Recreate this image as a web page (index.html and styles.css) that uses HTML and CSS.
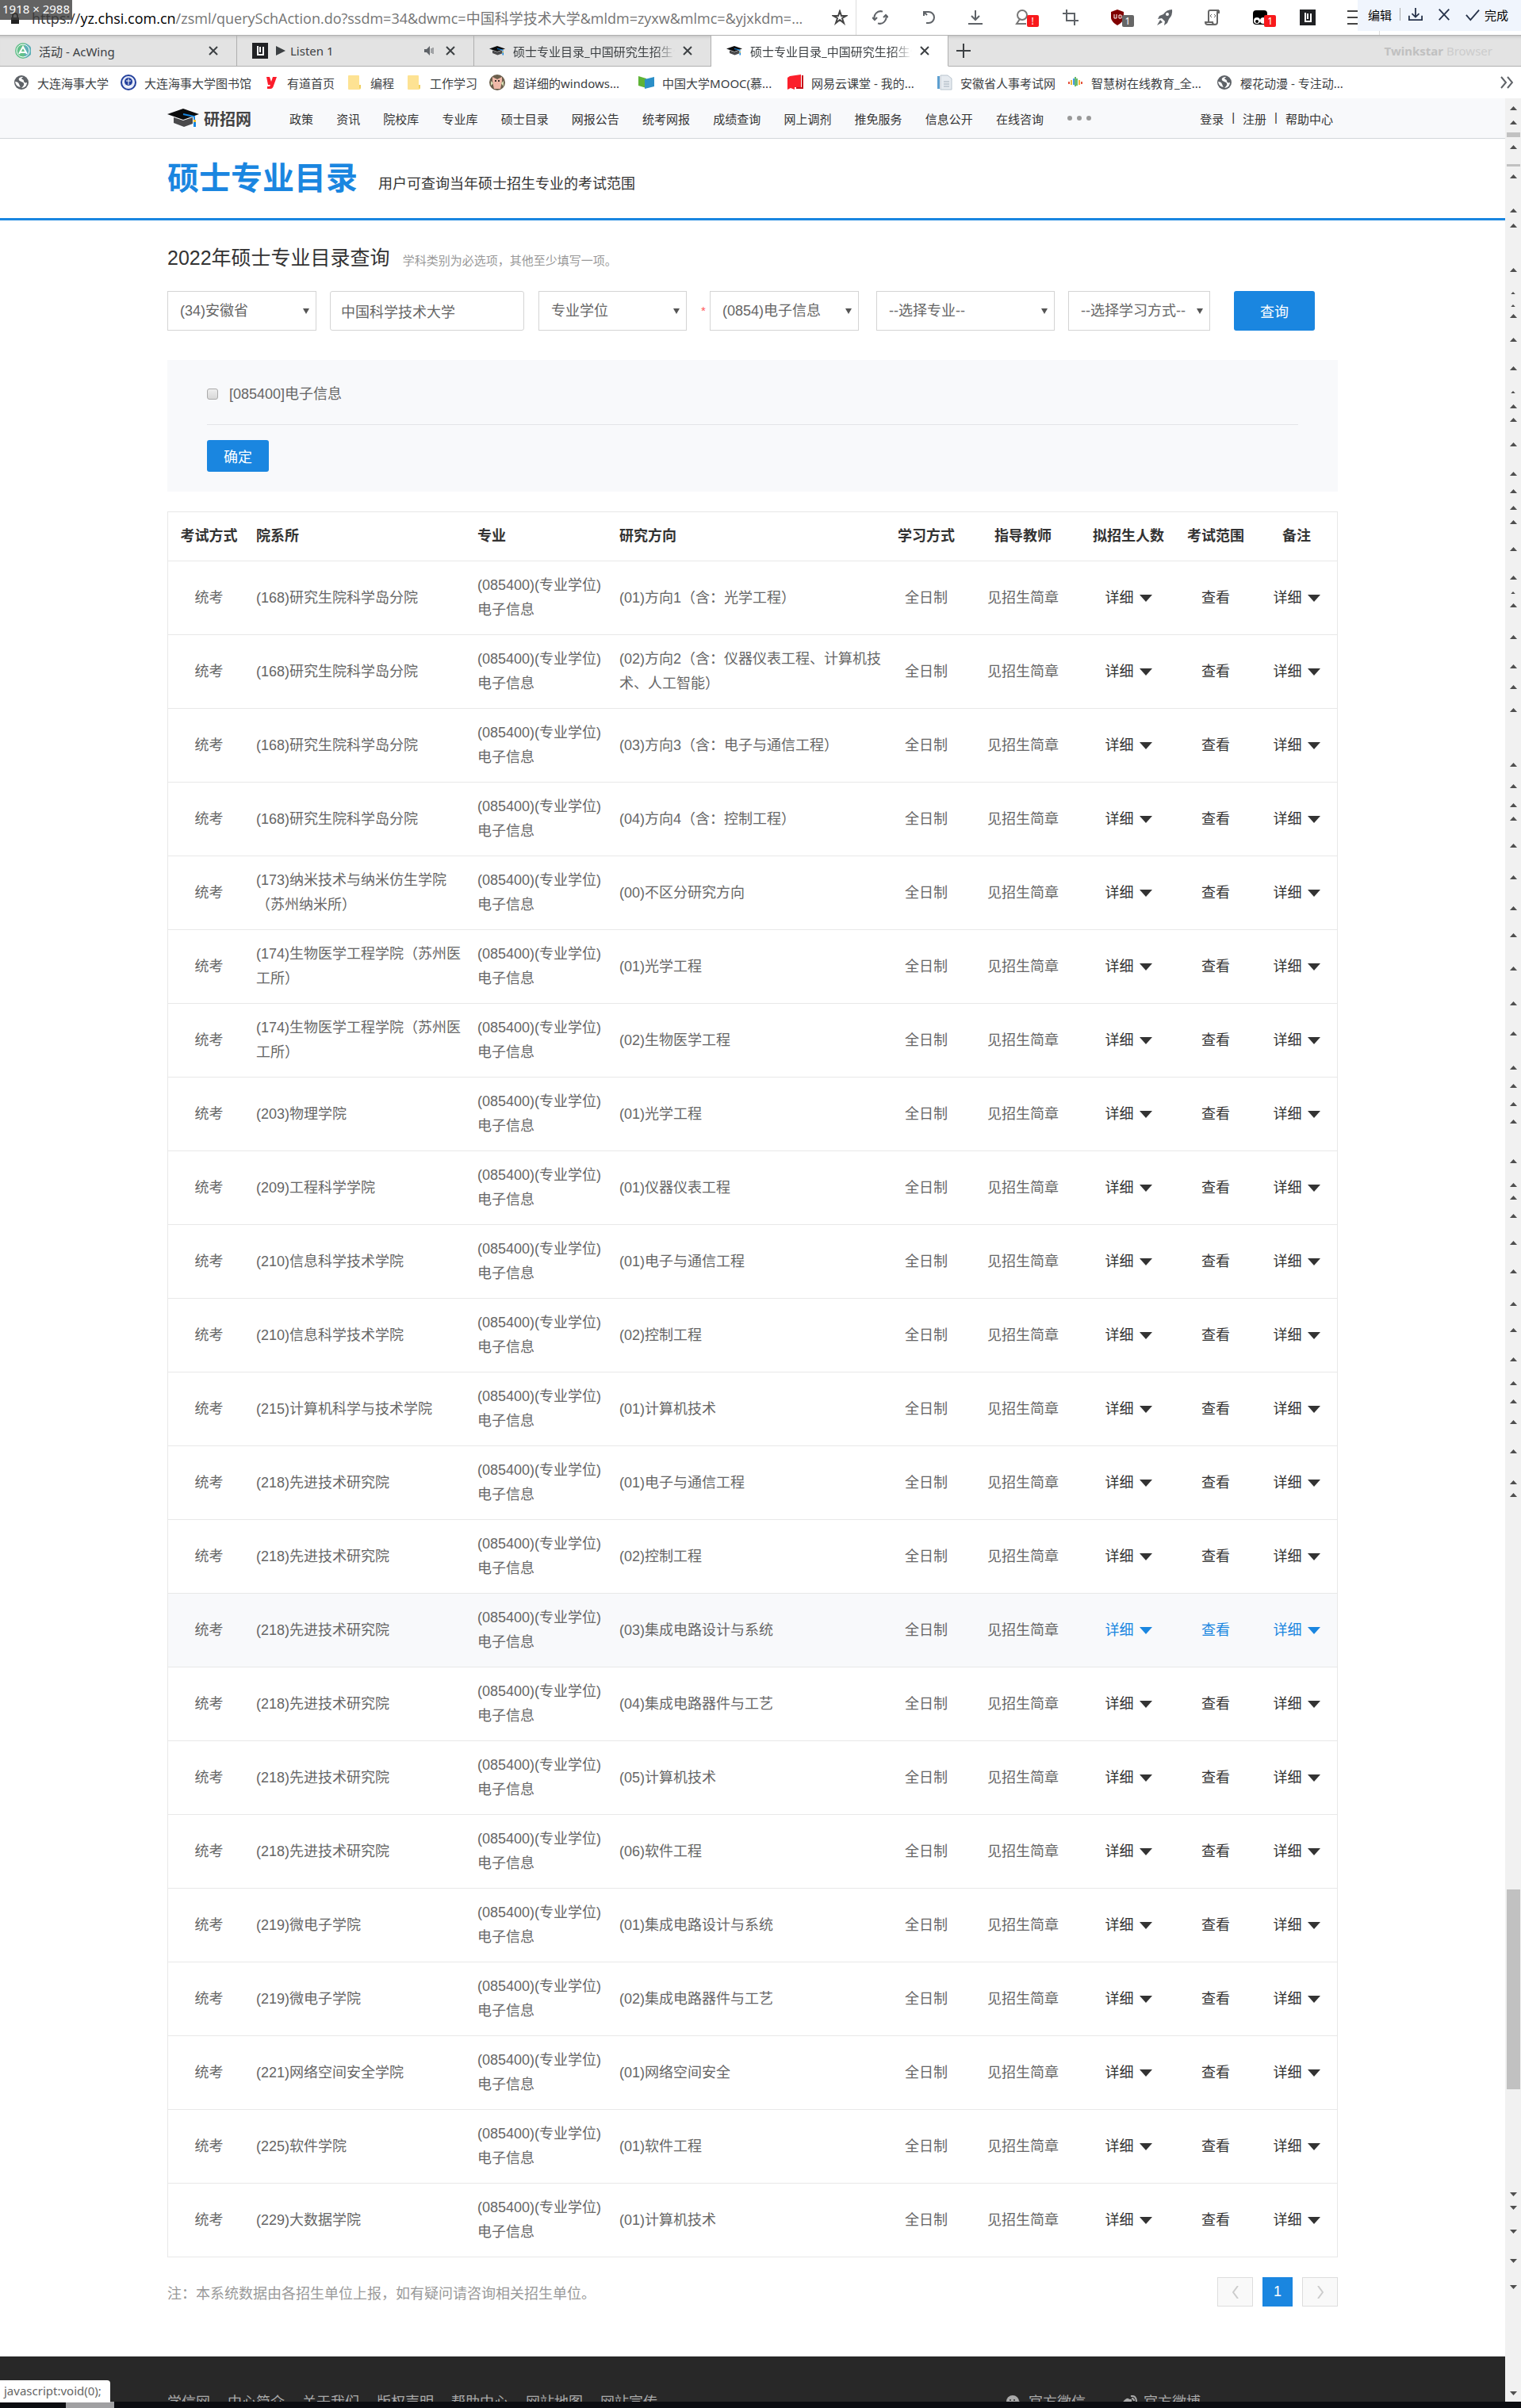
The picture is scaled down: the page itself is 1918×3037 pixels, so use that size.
FILE: index.html
```html
<!DOCTYPE html>
<html lang="zh-CN">
<head>
<meta charset="utf-8">
<title>硕士专业目录_中国研究生招生信息网</title>
<link rel="stylesheet" href="styles.css">
</head>
<body>
<svg class="defs" aria-hidden="true">
  <symbol id="cap" viewBox="0 0 40 24"><path d="M0 7 20 0l20 7-20 7z" fill="#0b0b0c"/><path d="M8 11l12 4 12-4v8l-11 4-13-5z" fill="#4a4a4c"/><path d="M20 7l14 3v8" fill="none" stroke="#1786e0" stroke-width="2"/><path d="M33 14h3v3h-3z" fill="#f2c230"/><path d="M33 17h3v6h-3z" fill="#1786e0"/></symbol>
  <symbol id="globe" viewBox="0 0 20 20"><circle cx="10" cy="10" r="9" fill="#5f6368"/><path d="M12 3c-4 0-6 2-5 4s5 2 6 4-1 4-3 6c5 0 7-4 7-7-2 1-4 0-4-2s-3-2-3-3 2-1 2-2z" fill="#fff"/><path d="M2 9q4 0 5 3t2 4q-6-1-7-7z" fill="#fff"/></symbol>
  <symbol id="folder" viewBox="0 0 20 20"><path d="M2 2q0-1 1-1h12q1 0 1 1v11h2v4q0 2-2 2H3q-1 0-1-1z" fill="#fde293"/><path d="M16 13v3q0 2 1 2t1-2v-3z" fill="#f0cf5e"/></symbol>
  <symbol id="close" viewBox="0 0 12 12"><path d="M1 1l10 10M11 1 1 11" stroke="#3c4043" stroke-width="2"/></symbol>
  <symbol id="listen" viewBox="0 0 20 20"><path d="M0 0h20v20H0z" fill="#202124"/><path d="M7 4v11h7V5M10 5v7" stroke="#fff" stroke-width="2" fill="none"/></symbol>
  <symbol id="up" viewBox="0 0 9 5"><path d="M0 5 4.500 0 9 5z" fill="#4f4f4f"/></symbol>
  <symbol id="down" viewBox="0 0 9 5"><path d="M0 0h9L4.500 5z" fill="#4f4f4f"/></symbol>
</svg>

<div class="toolbar">
  <div class="address">
    <svg class="lock" viewBox="0 0 12 14"><path d="M1 6h10v8H1z" fill="#222"/><path d="M3 6V4a3 3 0 0 1 6 0v2" fill="none" stroke="#222" stroke-width="2"/></svg>
    <span class="url"><span>https://</span><b>yz.chsi.com.cn</b>/zsml/querySchAction.do?ssdm=34&amp;dwmc=中国科学技术大学&amp;mldm=zyxw&amp;mlmc=&amp;yjxkdm=...</span>
    <button class="star" aria-label="收藏"><svg viewBox="0 0 20 20"><path d="M10 2l2 6h6l-5 3 2 6-5-4-5 4 2-6-5-3h6z" fill="none" stroke="#444" stroke-width="2"/></svg></button>
  </div>
  <div class="tools">
    <button aria-label="刷新"><svg viewBox="0 0 20 20" fill="none" stroke="#5f6368" stroke-width="2"><path d="M3 13A8 8 0 0 1 13 2.600M17 7A8 8 0 0 1 7 17.400"/><path d="M0 10l3 3 3-3M14 10l3-3 3 3"/></svg></button>
    <button aria-label="恢复"><svg viewBox="0 0 20 20" fill="none" stroke="#5f6368" stroke-width="2"><path d="M5 3h6a7 7 0 0 1 0 14H8M5 3l4 4M5 2v6"/></svg></button>
    <button aria-label="下载"><svg viewBox="0 0 20 20" fill="none" stroke="#5f6368" stroke-width="2"><path d="M10 1v12M5 8l5 5 5-5M1 18h18"/></svg></button>
    <button aria-label="用户"><svg viewBox="0 0 20 20" fill="none" stroke="#777" stroke-width="2"><circle cx="9" cy="7" r="6"/><path d="M6 12l-4 6h12"/></svg><i class="badge red">!</i></button>
    <button aria-label="截图"><svg viewBox="0 0 20 20" fill="none" stroke="#5f6368" stroke-width="2"><path d="M5 0v14h15M0 5h15v15"/></svg></button>
    <button aria-label="拦截"><svg viewBox="0 0 20 20"><path d="M10 0l8 3v8q-1 5-8 9-7-4-8-9V3z" fill="#800000"/><path d="M6 6v5h3V6M12 7h3v4h-3z" fill="none" stroke="#fff"/></svg><i class="badge gray">1</i></button>
    <button aria-label="加速"><svg viewBox="0 0 20 20" fill="#5f6368"><path d="M19 0q-7 0-11 6L3 8l-2 4 5-1 4 4-1 5 4-3 2-5q5-5 4-12z"/><path d="M4 13l-4 7 7-4z"/><circle cx="13" cy="6" r="2" fill="#fff"/></svg></button>
    <button aria-label="脚本"><svg viewBox="0 0 20 20" fill="none" stroke="#666" stroke-width="2"><path d="M5 15V3q0-2 2-2h11q-2 0-2 3v12q0 3-3 3H4q-3 0-3-3h9q0 3 3 3M18 1v3h-2"/><path d="M9 6L7 8l2 2M12 6l2 2-2 2" stroke-width="1"/></svg></button>
    <button aria-label="油猴"><svg viewBox="0 0 20 20"><rect x="1" y="1" width="18" height="18" rx="4"/><circle cx="6" cy="14" r="4" fill="#fff"/><circle cx="14" cy="14" r="4" fill="#fff"/><circle cx="6" cy="15" r="2"/></svg><i class="badge red">1</i></button>
    <button aria-label="Listen 1"><svg><use href="#listen"/></svg></button>
    <button aria-label="菜单"><svg viewBox="0 0 20 20" stroke="#444" stroke-width="2"><path d="M0 2h20M0 10h20M0 18h20"/></svg></button>
  </div>
</div>

<div class="tabs">
  <div class="tab"><svg class="ico" viewBox="0 0 20 20"><circle cx="10" cy="10" r="10" fill="#63c08a"/><path d="M12 1a9 9 0 0 1 0 18z" fill="#5fb0b8"/><circle cx="10" cy="10" r="8" fill="none" stroke="#fff"/><path d="M5 14l5-9 5 9M7 12h6" fill="none" stroke="#fff" stroke-width="2"/></svg><span>活动 - AcWing</span><button aria-label="关闭"><svg><use href="#close"/></svg></button></div>
  <div class="tab"><svg class="ico"><use href="#listen"/></svg><span><svg class="play" viewBox="0 0 12 12"><path d="M0 0l12 6-12 6z" fill="#3c4043"/></svg>Listen 1</span><svg class="sound" viewBox="0 0 12 12"><path d="M0 4h3l4-4v12L3 8H0z" fill="#5f6368"/><path d="M9 3v6M11 2v8" stroke="#5f6368"/></svg><button aria-label="关闭"><svg><use href="#close"/></svg></button></div>
  <div class="tab"><svg class="ico"><use href="#cap"/></svg><span class="fade">硕士专业目录_中国研究生招生信息网</span><button aria-label="关闭"><svg><use href="#close"/></svg></button></div>
  <div class="tab active"><svg class="ico"><use href="#cap"/></svg><span class="fade">硕士专业目录_中国研究生招生信息网</span><button aria-label="关闭"><svg><use href="#close"/></svg></button></div>
  <div class="tabs-rest"><button aria-label="新标签页"><svg viewBox="0 0 18 18" stroke="#3c4043" stroke-width="2"><path d="M9 0v18M0 9h18"/></svg></button><span class="brand"><b>Twinkstar</b> Browser</span></div>
</div>

<nav class="bookmarks" aria-label="书签">
  <a href="#"><svg><use href="#globe"/></svg>大连海事大学</a>
  <a href="#"><svg viewBox="0 0 20 20"><circle cx="10" cy="10" r="9" fill="#e6eaf8" stroke="#23409c" stroke-width="2"/><circle cx="10" cy="9" r="5" fill="#23409c"/><path d="M6 15h8M10 5v8M7 8h6" stroke="#fff"/></svg>大连海事大学图书馆</a>
  <a href="#"><svg viewBox="0 0 20 20"><path d="M4 3h4l2 6 2-6h5l-4 11q-1 4-4 4H5v-3h3l1-2H6z" fill="#fb1c2b"/></svg>有道首页</a>
  <a href="#"><svg><use href="#folder"/></svg>编程</a>
  <a href="#"><svg><use href="#folder"/></svg>工作学习</a>
  <a href="#" class="long"><svg viewBox="0 0 20 20"><circle cx="10" cy="10" r="10" fill="#6b5f4c"/><path d="M4 3l6 3 6-3v6l-2 9H6L4 9z" fill="#f0b9a8"/><path d="M2 8l3 3-3 3zM18 8l-3 3 3 4z" fill="#d8e0b4"/><circle cx="8" cy="8" r="1"/><circle cx="12" cy="8" r="1"/></svg>超详细的windows...</a>
  <a href="#" class="long"><svg viewBox="0 0 20 20"><path d="M0 2l10 3v12L0 14z" fill="#5fb336"/><path d="M20 3L8 6v12l12-3z" fill="#2b8fc7"/></svg>中国大学MOOC(慕...</a>
  <a href="#" class="long"><svg viewBox="0 0 20 20"><path d="M3 2l14-2v16H9v3l-5-2-4 2V4z" fill="#fb1f2b"/><path d="M18 1h2v17h-9v-2h7z" fill="#c6101b"/></svg>网易云课堂 - 我的...</a>
  <a href="#"><svg viewBox="0 0 20 20"><path d="M1 2h3v16H1z" fill="#5d9fd0"/><path d="M5 1h9l5 4v14H5z" fill="#e6ebf0" stroke="#b8c3cd"/><path d="M9 9h7M9 12h7M9 15h7" stroke="#a3afbb"/></svg>安徽省人事考试网</a>
  <a href="#" class="long"><svg viewBox="0 0 20 20" stroke-width="2"><path d="M2 9v3M18 9v3" stroke="#e5533c"/><path d="M5 7v6M15 7v6" stroke="#f0b73a"/><path d="M8 5v8" stroke="#4a9be8"/><path d="M12 5v9M10 3v12" stroke="#69ba6d"/></svg>智慧树在线教育_全...</a>
  <a href="#" class="long"><svg><use href="#globe"/></svg>樱花动漫 - 专注动...</a>
  <button class="overflow" aria-label="更多书签"><svg viewBox="0 0 16 16" fill="none" stroke="#5f6368" stroke-width="2"><path d="M1 1l6 7-6 7M9 1l6 7-6 7"/></svg></button>
</nav>

<div class="viewport">
  <div class="site">
    <header class="site-head">
      <div class="wrap head-row">
        <a href="#" class="logo"><svg><use href="#cap"/></svg>研招网</a>
        <nav class="menu" aria-label="主导航">
          <a href="#">政策</a><a href="#">资讯</a><a href="#">院校库</a><a href="#">专业库</a><a href="#">硕士目录</a><a href="#">网报公告</a><a href="#">统考网报</a><a href="#">成绩查询</a><a href="#">网上调剂</a><a href="#">推免服务</a><a href="#">信息公开</a><a href="#">在线咨询</a>
        </nav>
        <button class="dots" aria-label="更多"><i></i><i></i><i></i></button>
        <div class="account"><a href="#">登录</a><span>|</span><a href="#">注册</a><span>|</span><a href="#">帮助中心</a></div>
      </div>
    </header>
    <div class="title-bar"><div class="wrap title-row"><h1>硕士专业目录</h1><p>用户可查询当年硕士招生专业的考试范围</p></div></div>

    <main class="wrap">
      <div class="query-head"><h2>2022年硕士专业目录查询</h2><p>学科类别为必选项，其他至少填写一项。</p></div>
      <form class="query" onsubmit="return false">
        <label class="pick province"><select aria-label="省市"><option>(34)安徽省</option></select></label>
        <input class="school" type="text" aria-label="招生单位" value="中国科学技术大学">
        <label class="pick degree"><select aria-label="门类"><option>专业学位</option></select></label>
        <label class="pick subject"><select aria-label="学科类别"><option>(0854)电子信息</option></select></label>
        <label class="pick major"><select aria-label="专业"><option>--选择专业--</option></select></label>
        <label class="pick mode"><select aria-label="学习方式"><option>--选择学习方式--</option></select></label>
        <button class="primary search">查询</button>
      </form>
      <section class="filter">
        <div class="filter-opts"><input type="checkbox" id="m085400"><label for="m085400">[085400]电子信息</label></div>
        <button class="primary confirm">确定</button>
      </section>

      <table class="results">
        <colgroup><col class="c-exam"><col class="c-dept"><col class="c-major"><col class="c-dir"><col class="c-mode"><col class="c-tutor"><col class="c-num"><col class="c-side"><col class="c-side"></colgroup>
        <thead><tr><th>考试方式</th><th>院系所</th><th>专业</th><th>研究方向</th><th>学习方式</th><th>指导教师</th><th>拟招生人数</th><th>考试范围</th><th>备注</th></tr></thead>
        <tbody>
<tr><td>统考</td><td>(168)研究生院科学岛分院</td><td>(085400)(专业学位)电子信息</td><td>(01)方向1（含：光学工程）</td><td>全日制</td><td>见招生简章</td><td><a href="#" class="more">详细</a></td><td><a href="#">查看</a></td><td><a href="#" class="more">详细</a></td></tr>
<tr><td>统考</td><td>(168)研究生院科学岛分院</td><td>(085400)(专业学位)电子信息</td><td>(02)方向2（含：仪器仪表工程、计算机技术、人工智能）</td><td>全日制</td><td>见招生简章</td><td><a href="#" class="more">详细</a></td><td><a href="#">查看</a></td><td><a href="#" class="more">详细</a></td></tr>
<tr><td>统考</td><td>(168)研究生院科学岛分院</td><td>(085400)(专业学位)电子信息</td><td>(03)方向3（含：电子与通信工程）</td><td>全日制</td><td>见招生简章</td><td><a href="#" class="more">详细</a></td><td><a href="#">查看</a></td><td><a href="#" class="more">详细</a></td></tr>
<tr><td>统考</td><td>(168)研究生院科学岛分院</td><td>(085400)(专业学位)电子信息</td><td>(04)方向4（含：控制工程）</td><td>全日制</td><td>见招生简章</td><td><a href="#" class="more">详细</a></td><td><a href="#">查看</a></td><td><a href="#" class="more">详细</a></td></tr>
<tr><td>统考</td><td>(173)纳米技术与纳米仿生学院（苏州纳米所）</td><td>(085400)(专业学位)电子信息</td><td>(00)不区分研究方向</td><td>全日制</td><td>见招生简章</td><td><a href="#" class="more">详细</a></td><td><a href="#">查看</a></td><td><a href="#" class="more">详细</a></td></tr>
<tr><td>统考</td><td>(174)生物医学工程学院（苏州医工所）</td><td>(085400)(专业学位)电子信息</td><td>(01)光学工程</td><td>全日制</td><td>见招生简章</td><td><a href="#" class="more">详细</a></td><td><a href="#">查看</a></td><td><a href="#" class="more">详细</a></td></tr>
<tr><td>统考</td><td>(174)生物医学工程学院（苏州医工所）</td><td>(085400)(专业学位)电子信息</td><td>(02)生物医学工程</td><td>全日制</td><td>见招生简章</td><td><a href="#" class="more">详细</a></td><td><a href="#">查看</a></td><td><a href="#" class="more">详细</a></td></tr>
<tr><td>统考</td><td>(203)物理学院</td><td>(085400)(专业学位)电子信息</td><td>(01)光学工程</td><td>全日制</td><td>见招生简章</td><td><a href="#" class="more">详细</a></td><td><a href="#">查看</a></td><td><a href="#" class="more">详细</a></td></tr>
<tr><td>统考</td><td>(209)工程科学学院</td><td>(085400)(专业学位)电子信息</td><td>(01)仪器仪表工程</td><td>全日制</td><td>见招生简章</td><td><a href="#" class="more">详细</a></td><td><a href="#">查看</a></td><td><a href="#" class="more">详细</a></td></tr>
<tr><td>统考</td><td>(210)信息科学技术学院</td><td>(085400)(专业学位)电子信息</td><td>(01)电子与通信工程</td><td>全日制</td><td>见招生简章</td><td><a href="#" class="more">详细</a></td><td><a href="#">查看</a></td><td><a href="#" class="more">详细</a></td></tr>
<tr><td>统考</td><td>(210)信息科学技术学院</td><td>(085400)(专业学位)电子信息</td><td>(02)控制工程</td><td>全日制</td><td>见招生简章</td><td><a href="#" class="more">详细</a></td><td><a href="#">查看</a></td><td><a href="#" class="more">详细</a></td></tr>
<tr><td>统考</td><td>(215)计算机科学与技术学院</td><td>(085400)(专业学位)电子信息</td><td>(01)计算机技术</td><td>全日制</td><td>见招生简章</td><td><a href="#" class="more">详细</a></td><td><a href="#">查看</a></td><td><a href="#" class="more">详细</a></td></tr>
<tr><td>统考</td><td>(218)先进技术研究院</td><td>(085400)(专业学位)电子信息</td><td>(01)电子与通信工程</td><td>全日制</td><td>见招生简章</td><td><a href="#" class="more">详细</a></td><td><a href="#">查看</a></td><td><a href="#" class="more">详细</a></td></tr>
<tr><td>统考</td><td>(218)先进技术研究院</td><td>(085400)(专业学位)电子信息</td><td>(02)控制工程</td><td>全日制</td><td>见招生简章</td><td><a href="#" class="more">详细</a></td><td><a href="#">查看</a></td><td><a href="#" class="more">详细</a></td></tr>
<tr class="current"><td>统考</td><td>(218)先进技术研究院</td><td>(085400)(专业学位)电子信息</td><td>(03)集成电路设计与系统</td><td>全日制</td><td>见招生简章</td><td><a href="#" class="more">详细</a></td><td><a href="#">查看</a></td><td><a href="#" class="more">详细</a></td></tr>
<tr><td>统考</td><td>(218)先进技术研究院</td><td>(085400)(专业学位)电子信息</td><td>(04)集成电路器件与工艺</td><td>全日制</td><td>见招生简章</td><td><a href="#" class="more">详细</a></td><td><a href="#">查看</a></td><td><a href="#" class="more">详细</a></td></tr>
<tr><td>统考</td><td>(218)先进技术研究院</td><td>(085400)(专业学位)电子信息</td><td>(05)计算机技术</td><td>全日制</td><td>见招生简章</td><td><a href="#" class="more">详细</a></td><td><a href="#">查看</a></td><td><a href="#" class="more">详细</a></td></tr>
<tr><td>统考</td><td>(218)先进技术研究院</td><td>(085400)(专业学位)电子信息</td><td>(06)软件工程</td><td>全日制</td><td>见招生简章</td><td><a href="#" class="more">详细</a></td><td><a href="#">查看</a></td><td><a href="#" class="more">详细</a></td></tr>
<tr><td>统考</td><td>(219)微电子学院</td><td>(085400)(专业学位)电子信息</td><td>(01)集成电路设计与系统</td><td>全日制</td><td>见招生简章</td><td><a href="#" class="more">详细</a></td><td><a href="#">查看</a></td><td><a href="#" class="more">详细</a></td></tr>
<tr><td>统考</td><td>(219)微电子学院</td><td>(085400)(专业学位)电子信息</td><td>(02)集成电路器件与工艺</td><td>全日制</td><td>见招生简章</td><td><a href="#" class="more">详细</a></td><td><a href="#">查看</a></td><td><a href="#" class="more">详细</a></td></tr>
<tr><td>统考</td><td>(221)网络空间安全学院</td><td>(085400)(专业学位)电子信息</td><td>(01)网络空间安全</td><td>全日制</td><td>见招生简章</td><td><a href="#" class="more">详细</a></td><td><a href="#">查看</a></td><td><a href="#" class="more">详细</a></td></tr>
<tr><td>统考</td><td>(225)软件学院</td><td>(085400)(专业学位)电子信息</td><td>(01)软件工程</td><td>全日制</td><td>见招生简章</td><td><a href="#" class="more">详细</a></td><td><a href="#">查看</a></td><td><a href="#" class="more">详细</a></td></tr>
<tr><td>统考</td><td>(229)大数据学院</td><td>(085400)(专业学位)电子信息</td><td>(01)计算机技术</td><td>全日制</td><td>见招生简章</td><td><a href="#" class="more">详细</a></td><td><a href="#">查看</a></td><td><a href="#" class="more">详细</a></td></tr>
        </tbody>
      </table>

      <div class="after">
        <p>注：本系统数据由各招生单位上报，如有疑问请咨询相关招生单位。</p>
        <nav class="pager" aria-label="分页">
          <button aria-label="上一页"><svg viewBox="0 0 8 16"><path d="M7 0L1 8l6 8"/></svg></button>
          <a href="#">1</a>
          <button aria-label="下一页"><svg viewBox="0 0 8 16"><path d="M1 0l6 8-6 8"/></svg></button>
        </nav>
      </div>
    </main>

    <footer class="foot">
      <div class="wrap foot-row">
        <nav class="foot-links" aria-label="页脚"><a href="#">学信网</a><a href="#">中心简介</a><a href="#">关于我们</a><a href="#">版权声明</a><a href="#">帮助中心</a><a href="#">网站地图</a><a href="#">网站宣传</a></nav>
        <div class="social">
          <a href="#"><svg viewBox="0 0 20 20" fill="#aaa"><circle cx="8" cy="8" r="8"/><circle cx="14" cy="13" r="6"/><circle cx="5" cy="6" r="1" fill="#282828"/><circle cx="10" cy="6" r="1" fill="#282828"/></svg>官方微信</a>
          <a href="#"><svg viewBox="0 0 20 20" fill="none" stroke="#aaa" stroke-width="2"><path d="M13 8q1-4-3-3-2-3-6 1-4 4-3 8 3 5 9 4 7-2 6-8z" fill="#aaa" stroke="none"/><path d="M12 1q7-1 7 7M13 4q3 0 3 3"/></svg>官方微博</a>
        </div>
      </div>
    </footer>
  </div>

  <div class="rail" aria-hidden="true">
    <svg width="20" height="2905" viewBox="0 124 20 2905">
      <g fill="#c1c1c1"><path d="M2 167h17v6H2zM2 207h17v3H2zM2 2383h17v252H2z"/></g>
      <g class="ups"></g>
    </svg>
  </div>
</div>
<div class="taskbar"><i></i></div>

<div class="size-tip">1918 × 2988</div>
<div class="shot-bar">
  <button>编辑</button><i></i>
  <button class="save" aria-label="保存"><svg viewBox="0 0 20 20"><path d="M10 1v12M5 9l5 5 5-5M1 12v6h18v-6"/></svg></button>
  <button class="cancel" aria-label="取消"><svg viewBox="0 0 20 20"><path d="M3 3l14 15M17 3L3 18"/></svg></button>
  <button><svg viewBox="0 0 20 20"><path d="M1 11l6 7L19 4"/></svg>完成</button>
</div>
<div class="status">javascript:void(0);</div>
<script src="rail.js"></script>
</body>
</html>
```
FILE: rail.js
```js
// Scroll arrows along the rail: page y of each arrow's centre.
const ups = [136,154,185,222,265,284,340,398,428,464,512,529,560,597,619,640,658,692,728,763,803,840,866,895,964,991,1015,1032,1066,1106,1145,1179,1221,1265,1303,1346,1369,1392,1414,1464,1494,1510,1533,1567,1603,1644,1677,1714,1744,1767,1793,1830,1869,1885];
const smallUps = [369,385,494,747];
const downs = [2767,2784,2814,2851,2884,3018];
const group = document.querySelector(".ups");
function arrow(id, y, w, h) {
  const use = document.createElementNS("http://www.w3.org/2000/svg", "use");
  use.setAttribute("href", "#" + id);
  use.setAttribute("x", 10 - (w >> 1));
  use.setAttribute("y", y - (h >> 1));
  use.setAttribute("width", w);
  use.setAttribute("height", h);
  group.append(use);
}
ups.forEach(y => arrow("up", y, 9, 5));
smallUps.forEach(y => arrow("up", y, 6, 3));
downs.forEach(y => arrow("down", y, 9, 5));
```
FILE: styles.css
```css
* { box-sizing: border-box; }
body { margin: 0; position: relative; background: #fff; color: #333; font-family: "Liberation Sans", "Noto Sans CJK SC", sans-serif; font-size: 18px; overflow-x: hidden; }
a { color: inherit; text-decoration: none; }
button, input, select { font: inherit; color: inherit; margin: 0; }
button { background: none; border: 0; padding: 0; }
h1, h2, p { margin: 0; }
svg { flex: none; }
.defs { position: absolute; width: 0; height: 0; }

/* Browser chrome */
.toolbar, .tabs, .bookmarks, .size-tip, .shot-bar, .status { font-family: "Noto Sans", "Noto Sans CJK SC", sans-serif; font-size: 15px; }
.toolbar { display: flex; height: 45px; border-bottom: 1px solid #b0b0b0; }
.address { flex: 1; min-width: 0; display: flex; align-items: center; padding-left: 13px; border-right: 1px solid #ddd; }
.lock { width: 12px; height: 14px; margin: 2px 15px 0 0; }
.url { flex: 1; min-width: 0; overflow: hidden; white-space: nowrap; color: #757575; font-family: "Open Sans", "Noto Sans CJK SC", sans-serif; font-size: 18px; }
.url span { color: #333; }
.url b { font-weight: 400; color: #000; }
.star { width: 40px; height: 20px; }
.star svg, .tools svg { width: 20px; height: 20px; display: block; margin: auto; }
.tools { display: flex; width: 660px; margin-right: 178px; border-right: 1px solid #ddd; }
.tools button { position: relative; width: 60px; }
.badge { position: absolute; left: 35px; top: 19px; width: 15px; height: 15px; border-radius: 2px; color: #fff; font-size: 12px; font-style: normal; line-height: 15px; }
.red { background: #f8191c; }
.gray { background: #666; }

.tabs { display: flex; height: 39px; background: #e3e3e3; color: #3c4043; }
.tab { width: 299px; display: flex; align-items: center; gap: 10px; padding: 0 23px 0 19px; border-right: 1px solid #b0b0b0; border-bottom: 1px solid #b0b0b0; box-shadow: inset 0 5px 5px -5px #aaa; }
.tab span { flex: 1; min-width: 0; overflow: hidden; white-space: nowrap; }
.tab .fade { -webkit-mask: linear-gradient(to right, #000 88%, transparent); }
.tab.active { background: #fff; border-bottom-color: #fff; box-shadow: none; }
.tab .ico { width: 20px; height: 20px; }
.tab .sound { width: 12px; height: 12px; margin-right: 5px; }
.tab .play { width: 12px; height: 12px; margin-right: 6px; }
.tab button, .tab button svg { width: 12px; height: 12px; display: block; }
.tabs-rest { flex: 1; display: flex; justify-content: space-between; align-items: center; padding: 0 36px 0 10px; border-bottom: 1px solid #b0b0b0; box-shadow: inset 0 5px 5px -5px #aaa; }
.tabs-rest svg { width: 18px; height: 18px; display: block; }
.brand { color: #ccc; }
.brand b { color: #c0c0c0; }

.bookmarks { display: flex; align-items: center; gap: 15px; height: 40px; padding: 0 10px 0 17px; color: #3c4043; }
.bookmarks a { display: flex; align-items: center; gap: 10px; white-space: nowrap; }
.bookmarks a svg { width: 20px; height: 20px; }
.bookmarks .long { width: 173px; }
.overflow { margin-left: auto; }
.overflow svg { display: block; width: 16px; height: 16px; }

.size-tip { position: absolute; left: 0; top: 0; width: 91px; height: 25px; background: rgba(60, 60, 60, .8); color: #fff; line-height: 22px; text-align: center; }
.shot-bar { position: absolute; right: 0; top: 0; width: 206px; height: 39px; display: flex; align-items: center; gap: 10px; padding: 0 0 3px 13px; background: #f0f5fd; color: #000; }
.shot-bar button { display: flex; align-items: center; gap: 6px; }
.shot-bar .save, .shot-bar .cancel { margin-right: 8px; }
.shot-bar i { width: 1px; height: 16px; background: #aaa; }
.shot-bar svg { width: 18px; height: 18px; fill: none; stroke: #26324a; stroke-width: 2; }
.status { position: absolute; left: 0; bottom: 7px; width: 139px; height: 28px; background: #fff; color: #666; border-radius: 0 4px 0 0; padding-left: 5px; line-height: 27px; }
.taskbar { height: 8px; background: #0c0d11; }
.taskbar i { display: block; width: 61px; height: 8px; margin-left: 83px; background: #a0a0a2; }

/* Site */
.viewport { display: grid; grid-template-columns: minmax(0, 1fr) 20px; }
.rail { background: #f1f1f1; }
.rail svg { display: block; }
.wrap { width: 100%; max-width: 1476px; margin: 0 auto; }
.site-head { background: #f8f9fb; border-bottom: 1px solid #d3d6da; font-size: 15px; }
.head-row { height: 50px; display: flex; align-items: center; }
.logo { display: flex; align-items: center; gap: 6px; width: 154px; color: #444; font-size: 20px; font-weight: 700; }
.logo svg { width: 40px; height: 24px; }
.menu { display: flex; justify-content: space-between; width: 951px; }
.dots { display: flex; gap: 6px; margin-left: 30px; }
.dots i { width: 6px; height: 6px; border-radius: 50%; background: #999; }
.account { margin: 0 6px 0 auto; display: flex; gap: 10px; }
.title-bar { border-bottom: 3px solid #1a86e0; }
.title-row { height: 100px; display: flex; align-items: center; gap: 26px; }
h1 { color: #1a86e0; font-size: 40px; line-height: 50px; }
.title-row p { padding-top: 10px; }
.query-head { display: flex; align-items: baseline; gap: 16px; height: 89px; padding-top: 32px; line-height: 30px; }
h2 { font-size: 25px; font-weight: 400; }
.query-head p { font-size: 15px; color: #999; }

.query { display: flex; height: 50px; color: #666; }
.pick { position: relative; }
.pick::after { content: ""; position: absolute; right: 9px; top: 22px; border: 4px solid transparent; border-top: 7px solid #555; border-bottom: 0; }
.query select, .school { width: 100%; height: 50px; padding: 0 15px; border: 1px solid #d4d4d4; background: #fff; appearance: none; border-radius: 0; }
.query .school { width: 245px; margin: 0 18px 0 17px; border-radius: 3px; padding: 0 13px; }
.province { width: 188px; }
.degree { width: 187px; margin-right: 29px; }
.subject { width: 188px; margin-right: 22px; }
.subject::before { content: "*"; position: absolute; left: -11px; top: 16px; color: #f55; font-size: 15px; }
.major { width: 225px; margin-right: 17px; }
.mode { width: 179px; margin-right: 30px; }
.primary { background: #1a86e0; color: #fff; border-radius: 3px; }
.search { width: 102px; }
.filter { margin: 37px 0 25px; padding: 25px 50px; background: #f8f9fb; color: #666; }
.filter-opts { height: 57px; display: flex; gap: 14px; align-items: flex-start; border-bottom: 1px solid #e3e5e8; margin-bottom: 19px; line-height: 36px; }
.filter-opts input { appearance: none; width: 14px; height: 14px; margin-top: 11px; border: 1px solid #aaa; border-radius: 3px; background: linear-gradient(#eee, #d8d8d8); }
.confirm { display: block; width: 78px; height: 40px; }

.results { width: 100%; table-layout: fixed; border: 1px solid #e8e8e8; border-bottom: 0; border-collapse: separate; border-spacing: 0; line-height: 31px; }
.c-exam { width: 103px; }
.c-dept { width: 279px; }
.c-major { width: 179px; }
.c-mode { width: 96px; }
.c-tutor { width: 148px; }
.c-num { width: 118px; }
.c-side { width: 102px; }
.results th, .results td { padding: 15px 0; text-align: center; border-bottom: 1px solid #e8e8e8; }
.results th:nth-child(n+2):nth-child(-n+4), .results td:nth-child(n+2):nth-child(-n+4) { text-align: left; padding-left: 8px; }
.results td { color: #666; height: 93px; }
.results td a { color: #333; }
.more { display: inline-flex; align-items: center; gap: 7px; }
.more::after { content: ""; border: 8px solid transparent; border-top: 9px solid currentColor; border-bottom: 0; }
.results .current { background: #f8f9fb; }
.results .current a { color: #1a86e0; }

.after { display: flex; justify-content: space-between; align-items: center; padding: 25px 0 63px; color: #999; }
.pager { display: flex; gap: 12px; }
.pager button { width: 45px; height: 37px; border: 1px solid #ddd; background: #f9f9f9; }
.pager svg { width: 8px; height: 16px; display: block; margin: auto; fill: none; stroke: #ccc; stroke-width: 2; }
.pager a { width: 38px; height: 37px; background: #1a86e0; color: #fff; text-align: center; line-height: 36px; }
.foot { height: 57px; overflow: hidden; background: #282828; color: #aaa; }
.foot-row { display: flex; justify-content: space-between; padding-top: 45px; line-height: 27px; }
.foot-links { display: flex; gap: 22px; }
.social { display: flex; gap: 45px; padding-right: 173px; }
.social a { display: flex; align-items: center; gap: 8px; }
.social svg { width: 20px; height: 20px; }
```
